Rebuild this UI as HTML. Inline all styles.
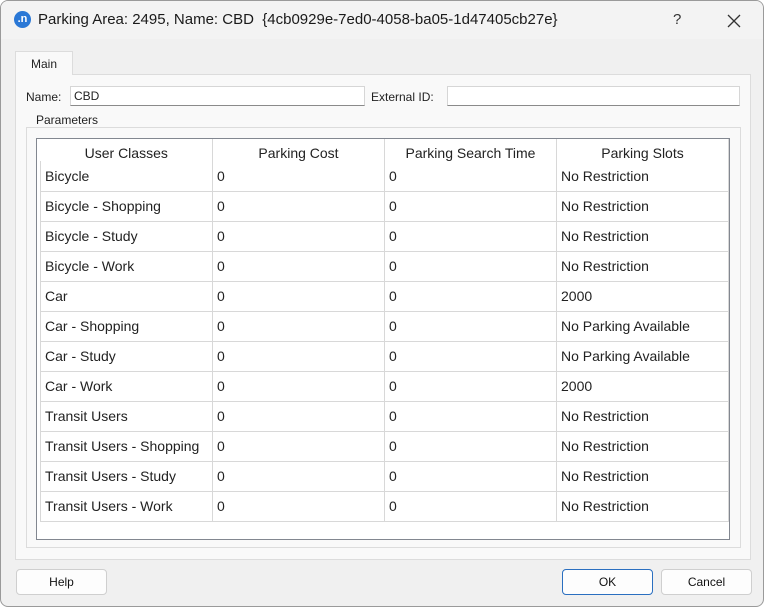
<!DOCTYPE html>
<html><head><style>
*{box-sizing:border-box;margin:0;padding:0}
body{width:765px;height:608px;background:#fff;font-family:"Liberation Sans",sans-serif;position:relative;overflow:hidden}
.win{position:absolute;left:0;top:0;width:764px;height:607px;background:#f0f0f0;border:1px solid #9a9a9a;border-radius:8px;overflow:hidden}
.title{position:absolute;left:0;top:0;width:100%;height:38px;background:#f3f3f3}
.abs{position:absolute;white-space:nowrap}
.pane{position:absolute;left:14px;top:73px;width:736px;height:486px;background:#f9f9f9;border:1px solid #dcdcdc}
.tab{position:absolute;left:14px;top:50px;width:58px;height:24px;background:#f9f9f9;border:1px solid #dcdcdc;border-bottom:none;font-size:12px;color:#222;text-align:center;line-height:24px}
.inp{position:absolute;height:20px;background:#fff;border:1px solid #d6d6d6;border-bottom:1px solid #8a8a8a;font-size:12px;line-height:18px;padding-left:3px;color:#222}
.lbl{position:absolute;font-size:12px;color:#222}
.grp{position:absolute;left:25px;top:126px;width:715px;height:421px;border:1px solid #dcdcdc}
.tbl{position:absolute;left:35px;top:137px;width:694px;height:402px;background:#fff;border:1px solid #828790}
table{position:absolute;left:3px;top:0;border-collapse:collapse;font-size:14px;color:#222}
td{height:30px;border-right:1px solid #d8d8d8;border-bottom:1px solid #d8d8d8;padding-left:4px;width:172px;vertical-align:middle}
td:first-child{border-left:1px solid #d8d8d8;width:172px}
th{height:22px;font-weight:normal;text-align:center;border-right:1px solid #d8d8d8;vertical-align:bottom;padding-bottom:0px;font-size:14px}
.btn{position:absolute;top:568px;height:26px;background:#fdfdfd;border:1px solid #cfcfcf;border-radius:4px;font-size:12px;text-align:center;line-height:24px;color:#111}
</style></head><body>
<div class="win">
<div class="title"></div>
<div class="abs" style="left:13px;top:10px;width:17px;height:17px;border-radius:50%;background:#2a78d6;color:#fff;font-size:11px;line-height:16px;text-align:center;font-weight:bold">.n</div>
<div class="abs" style="left:37px;top:10px;font-size:15px;color:#1a1a1a">Parking Area: 2495, Name: CBD&nbsp; {4cb0929e-7ed0-4058-ba05-1d47405cb27e}</div>
<div class="abs" style="left:672px;top:10px;font-size:15px;color:#333">?</div>
<svg class="abs" style="left:726px;top:13px" width="14" height="14"><path d="M1 1L13 13M13 1L1 13" stroke="#333" stroke-width="1.3"/></svg>
<div class="pane"></div>
<div class="tab">Main</div>
<div class="lbl" style="left:25px;top:89px">Name:</div>
<div class="inp" style="left:69px;top:85px;width:295px">CBD</div>
<div class="lbl" style="left:370px;top:89px">External ID:</div>
<div class="inp" style="left:446px;top:85px;width:293px"></div>
<div class="grp"></div>
<div class="lbl" style="left:33px;top:112px;background:#f9f9f9;padding:0 2px">Parameters</div>
<div class="tbl">
<table>
<tr><th>User Classes</th><th>Parking Cost</th><th>Parking Search Time</th><th>Parking Slots</th></tr>
<tr><td>Bicycle</td><td>0</td><td>0</td><td>No Restriction</td></tr>
<tr><td>Bicycle - Shopping</td><td>0</td><td>0</td><td>No Restriction</td></tr>
<tr><td>Bicycle - Study</td><td>0</td><td>0</td><td>No Restriction</td></tr>
<tr><td>Bicycle - Work</td><td>0</td><td>0</td><td>No Restriction</td></tr>
<tr><td>Car</td><td>0</td><td>0</td><td>2000</td></tr>
<tr><td>Car - Shopping</td><td>0</td><td>0</td><td>No Parking Available</td></tr>
<tr><td>Car - Study</td><td>0</td><td>0</td><td>No Parking Available</td></tr>
<tr><td>Car - Work</td><td>0</td><td>0</td><td>2000</td></tr>
<tr><td>Transit Users</td><td>0</td><td>0</td><td>No Restriction</td></tr>
<tr><td>Transit Users - Shopping</td><td>0</td><td>0</td><td>No Restriction</td></tr>
<tr><td>Transit Users - Study</td><td>0</td><td>0</td><td>No Restriction</td></tr>
<tr><td>Transit Users - Work</td><td>0</td><td>0</td><td>No Restriction</td></tr>
</table>
</div>
<div class="btn" style="left:15px;width:91px">Help</div>
<div class="btn" style="left:561px;width:91px;border-color:#2a6fc0">OK</div>
<div class="btn" style="left:660px;width:91px">Cancel</div>
</div>
</body></html>
